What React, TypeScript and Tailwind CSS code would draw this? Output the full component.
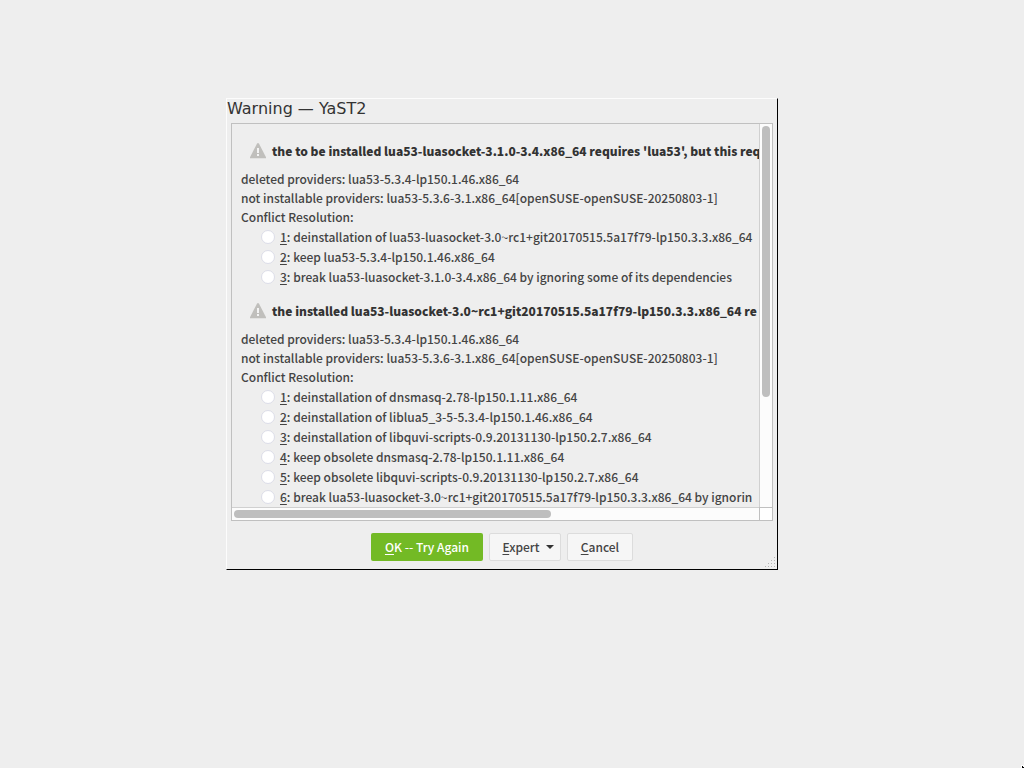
import type { ReactNode } from "react";

type Option = { key: string; text: string };
type Conflict = { id: string; title: string; details: string[]; options: Option[] };

const details = [
  "deleted providers: lua53-5.3.4-lp150.1.46.x86_64",
  "not installable providers: lua53-5.3.6-3.1.x86_64[openSUSE-openSUSE-20250803-1]",
  "Conflict Resolution:",
];

const conflicts: Conflict[] = [
  {
    id: "requires-lua53",
    title: "the to be installed lua53-luasocket-3.1.0-3.4.x86_64 requires 'lua53', but this req",
    details,
    options: [
      { key: "1", text: "deinstallation of lua53-luasocket-3.0~rc1+git20170515.5a17f79-lp150.3.3.x86_64" },
      { key: "2", text: "keep lua53-5.3.4-lp150.1.46.x86_64" },
      { key: "3", text: "break lua53-luasocket-3.1.0-3.4.x86_64 by ignoring some of its dependencies" },
    ],
  },
  {
    id: "installed-luasocket",
    title: "the installed lua53-luasocket-3.0~rc1+git20170515.5a17f79-lp150.3.3.x86_64 re",
    details,
    options: [
      { key: "1", text: "deinstallation of dnsmasq-2.78-lp150.1.11.x86_64" },
      { key: "2", text: "deinstallation of liblua5_3-5-5.3.4-lp150.1.46.x86_64" },
      { key: "3", text: "deinstallation of libquvi-scripts-0.9.20131130-lp150.2.7.x86_64" },
      { key: "4", text: "keep obsolete dnsmasq-2.78-lp150.1.11.x86_64" },
      { key: "5", text: "keep obsolete libquvi-scripts-0.9.20131130-lp150.2.7.x86_64" },
      { key: "6", text: "break lua53-luasocket-3.0~rc1+git20170515.5a17f79-lp150.3.3.x86_64 by ignorin" },
    ],
  },
];

function Mnemonic({ children }: { children: ReactNode }) {
  return <span className="underline decoration-1 underline-offset-2">{children}</span>;
}

function WarningIcon() {
  return (
    <svg className="h-4 w-4 shrink-0" viewBox="0 0 16 16" aria-hidden="true">
      <path d="M7.2 0.2h1.6L16 14.2V15.2H0V14.2z" fill="#c0bfbc" />
      <path d="M7 5h2v5H7zM7 11h2v2H7z" fill="#f4f4f4" />
    </svg>
  );
}

function ConflictSection({ conflict }: { conflict: Conflict }) {
  return (
    <section>
      <h2 className="flex h-7 items-center gap-1.5 pl-[9px] font-black text-[#333333]">
        <WarningIcon />
        {conflict.title}
      </h2>
      <div className="pt-1 pb-px">
        {conflict.details.map((line) => (
          <p key={line} className="h-[19px] leading-[19px]">{line}</p>
        ))}
      </div>
      <div className="pl-5">
        {conflict.options.map((option) => (
          <label key={option.key} className="flex h-5 items-center gap-[5px] leading-5">
            <input
              type="radio"
              name={conflict.id}
              className="h-3.5 w-3.5 shrink-0 appearance-none rounded-full border border-[#dcdde8] bg-white checked:bg-[#73ba25]"
            />
            <span>
              <Mnemonic>{option.key}</Mnemonic>: {option.text}
            </span>
          </label>
        ))}
      </div>
    </section>
  );
}

function ResizeGrip() {
  const dots = [0, 1, 2, 3].flatMap((row) =>
    Array.from({ length: row + 1 }, (_, i) => ({ x: 9 - i * 3, y: row * 3 })),
  );
  return (
    <svg className="absolute right-0.5 bottom-0.5 h-2.5 w-2.5" viewBox="0 0 10 10" shapeRendering="crispEdges" aria-hidden="true">
      {dots.map((dot) => (
        <rect key={`${dot.x}-${dot.y}`} x={dot.x} y={dot.y} width="1" height="1" fill="#b4b4b4" />
      ))}
    </svg>
  );
}

const plainButton = "flex h-7 items-center justify-center rounded-xs border border-[#dcdcdc] bg-[#f6f6f6]";

export default function App() {
  return (
    <main className="flex min-h-screen items-start bg-[#eeeeee] pt-[98px] pl-[226px] font-['Noto_Sans_CJK_SC','Open_Sans',sans-serif] text-xs font-medium text-[#444444]">
      <div
        role="dialog"
        aria-labelledby="dialog-title"
        className="relative w-full max-w-[552px] border border-t-[#fcfcfc] border-r-black border-b-black border-l-[#fcfcfc]"
      >
        <h1 id="dialog-title" className="h-6 font-['DejaVu_Sans',sans-serif] text-base leading-5 font-normal text-[#333333]">
          Warning — YaST2
        </h1>
        <div className="mx-1 grid grid-cols-[minmax(0,1fr)_13px] border border-[#c0c0c0]">
          <div className="h-[383px] overflow-hidden whitespace-nowrap pl-[9px]">
            <div className="flex flex-col gap-2.5 pt-[13px]">
              {conflicts.map((conflict) => (
                <ConflictSection key={conflict.id} conflict={conflict} />
              ))}
            </div>
          </div>
          <div className="border-l border-[#d0d0d0] bg-[#fcfcfc] px-0.5 pt-0.5">
            <div className="h-[271px] rounded-full bg-[#bebebe]" />
          </div>
          <div className="h-[13px] border-t border-[#d0d0d0] bg-[#fcfcfc] px-0.5 py-0.5">
            <div className="h-2 w-[317px] rounded-full bg-[#bebebe]" />
          </div>
          <div className="border-t border-l border-[#c0c0c0] bg-white" />
        </div>
        <div className="flex justify-center gap-1.5 pt-3 pb-2">
          <button type="button" className="h-7 w-28 rounded-xs bg-[#73ba25] text-white">
            <Mnemonic>O</Mnemonic>K -- Try Again
          </button>
          <button type="button" className={`${plainButton} w-[72px] gap-1.5 pl-1.5`}>
            <span><Mnemonic>E</Mnemonic>xpert</span>
            <svg className="h-1 w-2" viewBox="0 0 8 4" aria-hidden="true">
              <path d="M0 0h8L4 4z" fill="#333333" />
            </svg>
          </button>
          <button type="button" className={`${plainButton} w-[66px]`}>
            <span><Mnemonic>C</Mnemonic>ancel</span>
          </button>
        </div>
        <ResizeGrip />
      </div>
      <svg className="fixed right-0 bottom-0 h-[3px] w-[3px]" viewBox="0 0 3 3" shapeRendering="crispEdges" aria-hidden="true">
        <path d="M0 0h3v3H0z" fill="#ffffff" />
        <path d="M1 1h1v1h1v1H1z" fill="#000000" />
      </svg>
    </main>
  );
}
